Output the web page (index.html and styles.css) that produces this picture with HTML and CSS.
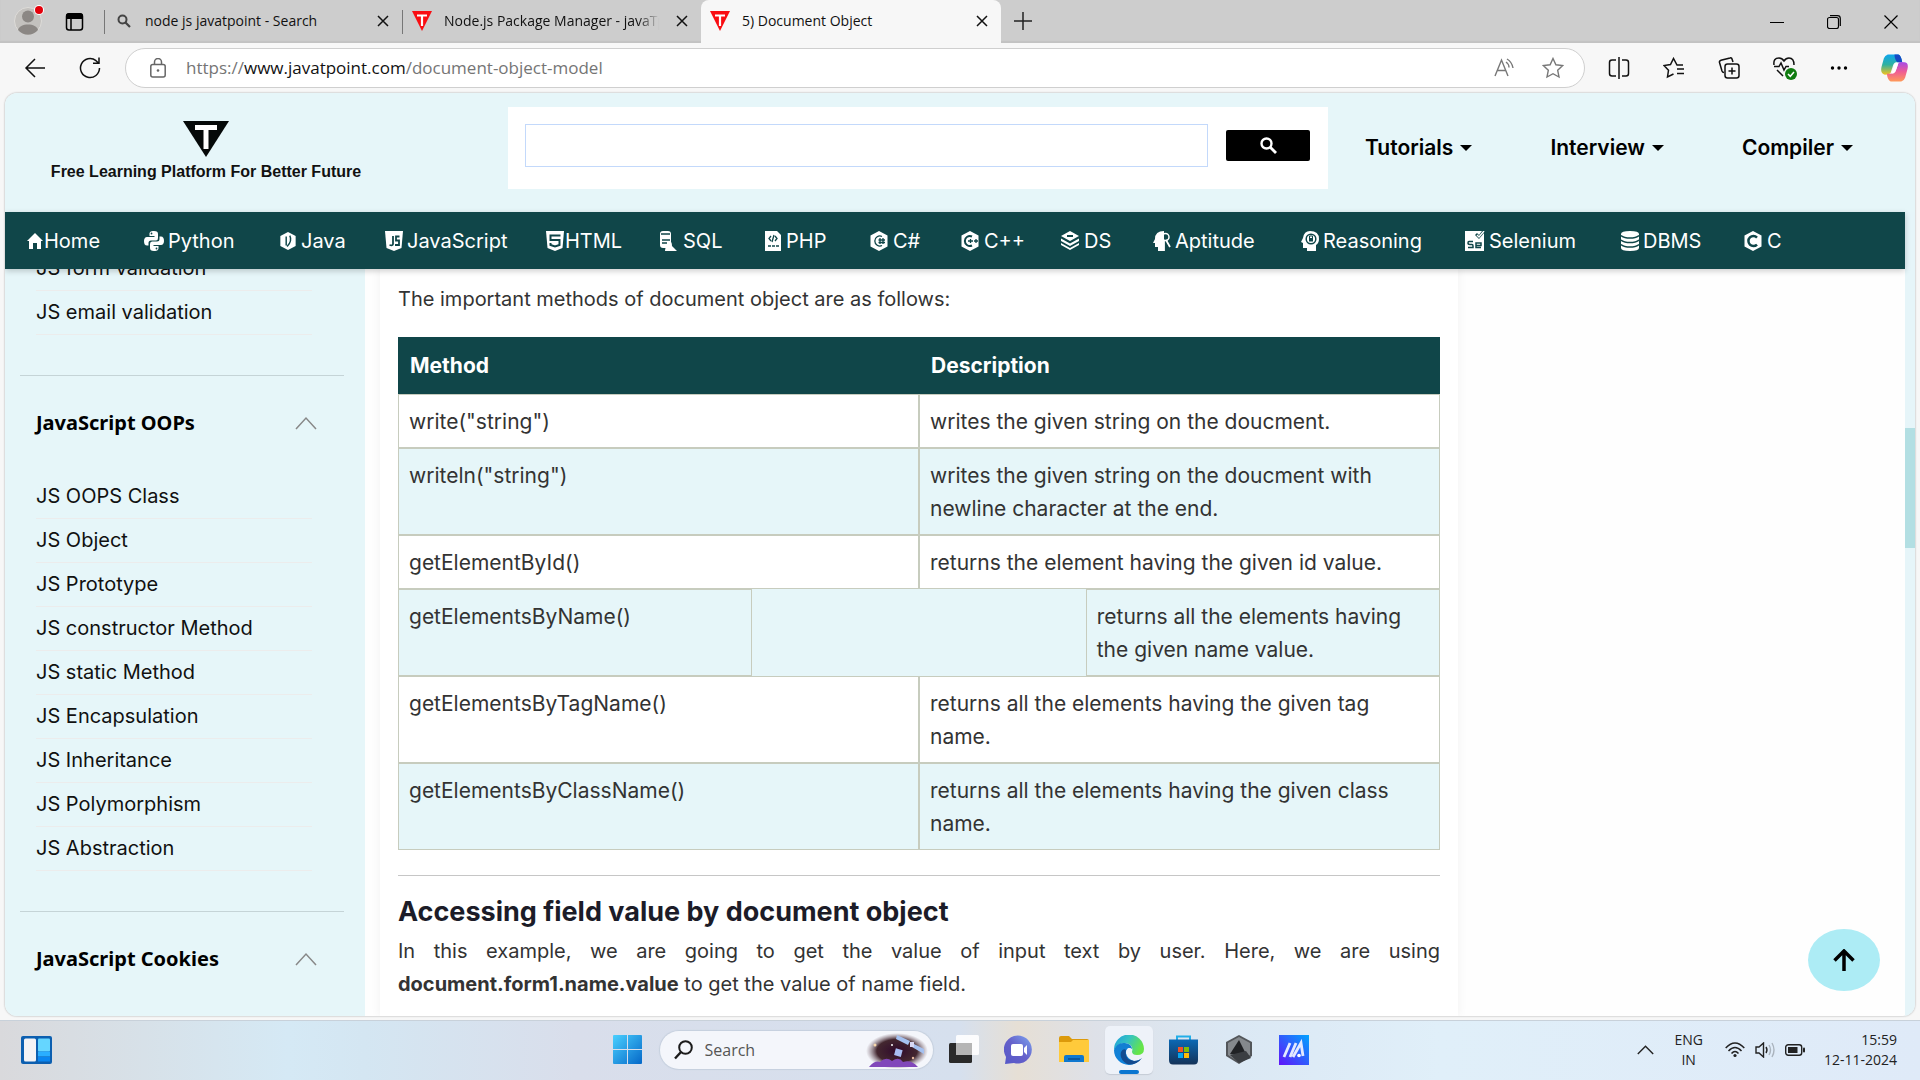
FILE: index.html
```html
<!DOCTYPE html>
<html lang="en">
<head>
<meta charset="utf-8">
<title>5) Document Object</title>
<link rel="stylesheet" href="styles.css">
</head>
<body>
<svg width="0" height="0" class="defs" aria-hidden="true">
  <defs>
    <symbol id="close" viewBox="0 0 12 12"><path d="M1 1L11 11M11 1L1 11" fill="none" stroke="#111" stroke-width="1.5"/></symbol>
    <symbol id="fav" viewBox="0 0 20 20"><path d="M0 0H20L10 20Z" fill="#f90d12"/><path d="M5 4.500H15M10 4.500V15" fill="none" stroke="#fff" stroke-width="2.200"/></symbol>
    <symbol id="up" viewBox="0 0 22 14"><path d="M1 13L11 2L21 13" fill="none" stroke="#888" stroke-width="1.500"/></symbol>
    <symbol id="hex" viewBox="0 0 20 20"><path d="M10 0L18.500 4.500V15.500L10 20L1.500 15.500V4.500Z" fill="#fff"/></symbol>
  </defs>
</svg>

<div class="tabbar">
  <button class="profile" aria-label="Profile"><svg width="32" height="32" viewBox="0 0 32 32"><circle cx="15" cy="18" r="13.500" fill="#c3c1be" stroke="#dedcd9"/><circle cx="15" cy="13.500" r="6" fill="#8b8784"/><path d="M5 27C6 19.500 24 19.500 25 27A13 13 0 0 1 5 27Z" fill="#8b8784"/><circle cx="26" cy="7" r="5" fill="#fff"/><circle cx="26" cy="7" r="4" fill="#e3000b"/></svg></button>
  <button class="workspaces" aria-label="Tab actions"><svg width="20" height="20" viewBox="0 0 20 20"><rect x="1.500" y="2" width="16" height="16" rx="2.500" fill="none" stroke="#000" stroke-width="1.500"/><path d="M1 7V4Q1 1 4 1H15Q18 1 18 4V7Z"/><path d="M6 7V18" stroke="#000" stroke-width="1.500"/></svg></button>
  <div class="tab first">
    <svg width="14" height="14" viewBox="0 0 14 14"><circle cx="5.500" cy="5.500" r="4" fill="none" stroke="#444" stroke-width="2"/><path d="M8.500 8.500L13 13" stroke="#444" stroke-width="2.200"/></svg>
    <a href="#" class="tab-title">node js javatpoint - Search</a>
    <button aria-label="Close tab"><svg width="12" height="12"><use href="#close"/></svg></button>
  </div>
  <div class="tab second">
    <svg width="20" height="20"><use href="#fav"/></svg>
    <a href="#" class="tab-title fade">Node.js Package Manager - javaTpoint</a>
    <button aria-label="Close tab"><svg width="12" height="12"><use href="#close"/></svg></button>
  </div>
  <div class="tab active">
    <svg width="20" height="20"><use href="#fav"/></svg>
    <a href="#" class="tab-title">5) Document Object</a>
    <button aria-label="Close tab"><svg width="12" height="12"><use href="#close"/></svg></button>
  </div>
  <button class="new-tab" aria-label="New tab"><svg width="18" height="18" viewBox="0 0 18 18"><path d="M9 0V18M0 9H18" stroke="#222" stroke-width="1.500"/></svg></button>
  <div class="window-buttons">
    <button aria-label="Minimize"><svg width="14" height="14" viewBox="0 0 14 14"><path d="M0 7.500H14" stroke="#000"/></svg></button>
    <button aria-label="Restore"><svg width="14" height="14" viewBox="0 0 14 14"><rect x=".5" y="2.500" width="11" height="11" rx="2" fill="none" stroke="#000" stroke-width="1.200"/><path d="M3 .7H10.500Q13.300 .7 13.300 3.500V11" fill="none" stroke="#000" stroke-width="1.200"/></svg></button>
    <button aria-label="Close"><svg width="14" height="14" viewBox="0 0 14 14"><path d="M.5 .5L13.500 13.500M13.500 .5L.5 13.500" stroke="#000" stroke-width="1.200"/></svg></button>
  </div>
</div>

<div class="toolbar">
  <button aria-label="Back"><svg width="22" height="20" viewBox="0 0 22 20"><path d="M21 10H2M11 1L2 10L11 19" fill="none" stroke="#111" stroke-width="1.500"/></svg></button>
  <button aria-label="Reload" class="reload"><svg width="22" height="22" viewBox="0 0 22 22"><path d="M20.500 11A9.500 9.500 0 1 1 17 3.700L19.500 6M20 .5V6.300H14" fill="none" stroke="#111" stroke-width="1.500"/></svg></button>
  <div class="address">
    <svg width="16" height="20" viewBox="0 0 16 20"><rect x=".8" y="6.500" width="14.400" height="12.500" rx="2" fill="none" stroke="#666" stroke-width="1.500"/><path d="M4.500 6V4A3.500 3.500 0 0 1 11.500 4V6" fill="none" stroke="#666" stroke-width="1.500"/><circle cx="8" cy="12.500" r="1.300" fill="#666"/></svg>
    <div class="url" role="textbox" aria-label="Address">https://<span>www.javatpoint.com</span>/document-object-model</div>
    <button aria-label="Read aloud"><svg width="20" height="20" viewBox="0 0 20 20" fill="none" stroke="#777" stroke-width="1.400"><path d="M1 18L7.500 2L14 18M3.500 12.500H11.500M12 4Q15 6 15 9.500M13 1Q18 4 19 10"/></svg></button>
    <button aria-label="Add to favorites" class="star"><svg width="22" height="22" viewBox="0 0 22 22" fill="none" stroke="#777" stroke-width="1.400"><path d="M11 1.500L13.900 7.800L20.700 8.600L15.700 13.300L17 20L11 16.700L5 20L6.300 13.300L1.300 8.600L8.100 7.800Z"/></svg></button>
  </div>
  <div class="tools">
    <button aria-label="Split screen"><svg width="22" height="22" viewBox="0 0 22 22" fill="none" stroke="#111" stroke-width="1.500"><path d="M8 3H4Q1.500 3 1.500 5.500V16.500Q1.500 19 4 19H8M14 3H18Q20.500 3 20.500 5.500V16.500Q20.500 19 18 19H14M11 0V22"/></svg></button>
    <button aria-label="Favorites"><svg width="22" height="22" viewBox="0 0 22 22" fill="none" stroke="#111" stroke-width="1.500"><path d="M20 8H14L10.500 1.500L7.500 7.500L1 8.500L5.500 13.300L4.500 20L10.500 17M14 12H21M14 16.500H21"/></svg></button>
    <button aria-label="Collections"><svg width="22" height="22" viewBox="0 0 22 22" fill="none" stroke="#111" stroke-width="1.500"><rect x="7" y="7" width="14" height="14" rx="2.500"/><path d="M14 10.500V17.500M10.500 14H17.500M15 5L14 2Q13.500 .5 12 1L3 3.200Q1 4 1.500 5.500L4 14Q4.500 15.500 6 15.500"/></svg></button>
    <button aria-label="Browser essentials"><svg width="24" height="24" viewBox="0 0 24 24" fill="none" stroke="#111" stroke-width="1.500"><path d="M1 9Q0 2 6 2Q9 2 11 5Q13 2 16 2Q21 2 21 9M1 10.500H6L8 7L11 14L13 10.500H16M4 14L10 20"/><circle cx="18" cy="18" r="6" fill="#107c10" stroke="none"/><path d="M15 18L17.300 20.300L21 16" stroke="#fff"/></svg></button>
    <button aria-label="Settings and more"><svg width="18" height="6" viewBox="0 0 18 6"><circle cx="2.500" cy="3" r="1.700"/><circle cx="9" cy="3" r="1.700"/><circle cx="15.500" cy="3" r="1.700"/></svg></button>
    <button aria-label="Copilot"><svg width="27" height="28" viewBox="0 0 28 28">
      <defs><linearGradient id="c1" x1="0" y1="0" x2="0" y2="1"><stop offset="0" stop-color="#0ea5ee"/><stop offset=".5" stop-color="#2eb1a0"/><stop offset="1" stop-color="#f6c21c"/></linearGradient><linearGradient id="c2" x1="0" y1="0" x2="0" y2="1"><stop offset="0" stop-color="#a44bea"/><stop offset=".5" stop-color="#ef5c95"/><stop offset="1" stop-color="#ff9a58"/></linearGradient></defs>
      <path d="M7 0H18Q21 1 22 8H16Q13 8 12 13L10 19Q9 21 4 21Q-1 20 .5 13L3 4Q4 1 7 0Z" fill="url(#c1)"/><path d="M14 0H18Q21 1 22 8H17Q14 5 14 0Z" fill="#1549c4"/>
      <path d="M21 28H10Q7 27 6 20H9Q14 20 16 15L18 9Q19 7 24 8Q29 8 27.500 15L25 24Q24 27 21 28Z" fill="url(#c2)"/><path d="M14 10Q16 8 18 9L15 18Q14 20 11 20Z" fill="#fff"/></svg></button>
  </div>
</div>

<div class="viewport">
  <div class="page">
    <header class="site-header">
      <a href="#" class="logo">
        <svg width="46" height="36" viewBox="0 0 46 36"><path d="M0 0H46L23 36Z" fill="#050909"/><path d="M12 6.500H34M23 6.500V28" fill="none" stroke="#fff" stroke-width="5"/></svg>
        <span>Free Learning Platform For Better Future</span>
      </a>
      <form class="search">
        <input type="text" aria-label="Search">
        <button type="button" aria-label="Search"><svg width="17" height="17" viewBox="0 0 17 17"><circle cx="6.500" cy="6.500" r="5" fill="none" stroke="#fff" stroke-width="2.400"/><path d="M10 10L16 16" stroke="#fff" stroke-width="2.800"/></svg></button>
      </form>
      <div class="menus">
        <button>Tutorials</button>
        <button>Interview</button>
        <button>Compiler</button>
      </div>
    </header>
    <nav class="topics">
      <a href="#" class="tight"><svg width="16" height="18" viewBox="0 0 16 18" fill="#fff"><path d="M8 1L16 9H14V17H10V11H6V17H2V9H0Z"/></svg>Home</a>
      <a href="#"><svg width="20" height="20" viewBox="0 0 20 20"><path d="M10 0C6 0 5.500 1.500 5.500 3V5H10.500V6H3C1 6 0 8 0 10C0 13 1 14.500 3 14.500H4.500V12Q4.500 9.500 7 9.500H12Q14 9.500 14 7V3C14 1 13 0 10 0ZM10 20C14 20 14.500 18.500 14.500 17V15H9.500V14H17C19 14 20 12 20 10C20 7 19 5.500 17 5.500H15.500V8Q15.500 10.500 13 10.500H8Q6 10.500 6 13V17C6 19 7 20 10 20Z" fill="#fff"/><circle cx="7.500" cy="2.500" r=".9" fill="#104649"/><circle cx="12.500" cy="17.500" r=".9" fill="#104649"/></svg>Python</a>
      <a href="#"><svg width="18" height="20" viewBox="0 0 20 20"><use href="#hex"/><path d="M8 5V15M12 4Q15 10 9 16" fill="none" stroke="#104649" stroke-width="1.600"/></svg>Java</a>
      <a href="#"><svg width="18" height="20" viewBox="0 0 18 20"><path d="M0 0H18L16.500 17L9 20L1.500 17Z" fill="#fff"/><path d="M8 5V13Q8 15 4.500 14M14.500 5.500H11V9.500H14V14L10 14" fill="none" stroke="#104649" stroke-width="1.800"/></svg>JavaScript</a>
      <a href="#" class="tight"><svg width="18" height="20" viewBox="0 0 18 20"><path d="M0 0H18L16.500 17L9 20L1.500 17Z" fill="#fff"/><path d="M14.500 4.500H4.500V9H13.500V14L9 15.500L4.500 14V12" fill="none" stroke="#104649" stroke-width="2"/></svg>HTML</a>
      <a href="#" class="roomy"><svg width="18" height="20" viewBox="0 0 18 20"><rect x="1" width="11" height="17" rx="3" fill="#fff"/><path d="M2 3H11M3 9H11M3 12H8" stroke="#104649" stroke-width="1.500"/><path d="M10 10Q13 10 13 15L18 20H6Q6 15 10 15Z" fill="#fff"/></svg>SQL</a>
      <a href="#"><svg width="18" height="20" viewBox="0 0 18 20"><path d="M1 0H13L17 4V20H1Z" fill="#fff"/><path d="M7 5L5 7.500L7 10M11 5L13 7.500L11 10M10 4L8 11M4 15H7M8 15H11M12 15H15" fill="none" stroke="#104649" stroke-width="1.300"/></svg>PHP</a>
      <a href="#"><svg width="20" height="20" viewBox="0 0 20 20"><use href="#hex"/><path d="M13 5.500A5 5 0 1 0 13 14.500M11 7V13M14 7V13M9.500 9H16M9.500 11.500H16" fill="none" stroke="#104649" stroke-width="1.300"/></svg>C#</a>
      <a href="#"><svg width="20" height="20" viewBox="0 0 20 20"><use href="#hex"/><path d="M12 5.500A5 5 0 1 0 12 14.500" fill="none" stroke="#104649" stroke-width="2"/><path d="M8 10H13M14 10H18M10.500 8V12M16 8V12" stroke="#104649" stroke-width="1.300"/></svg>C++</a>
      <a href="#"><svg width="20" height="20" viewBox="0 0 20 20" fill="#fff"><path d="M10 0L19 5L10 10L1 5Z"/><path d="M1 7.500L10 12.500L19 7.500V10L10 15L1 10ZM1 12L10 17L19 12V14L10 19L1 14Z"/><path d="M7 5H13" stroke="#104649" stroke-width="2"/></svg>DS</a>
      <a href="#"><svg width="18" height="20" viewBox="0 0 18 20"><path d="M11 0Q2 0 2 8L0 12H2V16H5V20H11Z" fill="#fff"/><circle cx="12.500" cy="6" r="3.500" fill="none" stroke="#fff" stroke-width="1.500"/><path d="M13 9L17 16M11 9V20" stroke="#fff" stroke-width="1.800"/></svg>Aptitude</a>
      <a href="#"><svg width="18" height="20" viewBox="0 0 18 20"><path d="M9 0Q18 0 18 8Q18 12 15 14V20H6V17H2V12L0 11L2 7Q3 0 9 0Z" fill="#fff"/><circle cx="10" cy="8" r="4.800" fill="none" stroke="#104649" stroke-width="1.500"/><rect x="8" y="7" width="4" height="3.500" fill="#104649"/><path d="M8.500 7V5H11.500V7" fill="none" stroke="#104649"/></svg>Reasoning</a>
      <a href="#"><svg width="20" height="20" viewBox="0 0 20 20"><path d="M0 0H17L14 4L12 2L10 4L14 8L19 2V20H0Z" fill="#fff"/><path d="M19 0L14 6L12 4" fill="none" stroke="#fff" stroke-width="1.400"/><path d="M8 10.500H4Q3 10.500 3 12Q3 13.500 5 13.500H7Q8 13.500 8 15V16.500H3M11 14.500H16V12H11V16.500H16" fill="none" stroke="#104649" stroke-width="1.500"/></svg>Selenium</a>
      <a href="#"><svg width="18" height="20" viewBox="0 0 18 20"><path d="M0 3Q0 0 9 0T18 3V17Q18 20 9 20T0 17Z" fill="#fff"/><path d="M0 4.500Q3 7 9 7T18 4.500M0 9Q3 11.500 9 11.500T18 9M0 13.500Q3 16 9 16T18 13.500" fill="none" stroke="#104649" stroke-width="1.400"/></svg>DBMS</a>
      <a href="#"><svg width="20" height="20" viewBox="0 0 20 20"><use href="#hex"/><path d="M14 6.500A5 5 0 1 0 14 13.500" fill="none" stroke="#104649" stroke-width="2.500"/></svg>C</a>
    </nav>
    <div class="columns">
      <aside class="sidebar">
        <ul class="links scrolled">
          <li><a href="#">JS form validation</a></li>
          <li><a href="#">JS email validation</a></li>
        </ul>
        <h2><button>JavaScript OOPs<svg width="22" height="14"><use href="#up"/></svg></button></h2>
        <ul class="links">
          <li><a href="#">JS OOPS Class</a></li>
          <li><a href="#">JS Object</a></li>
          <li><a href="#">JS Prototype</a></li>
          <li><a href="#">JS constructor Method</a></li>
          <li><a href="#">JS static Method</a></li>
          <li><a href="#">JS Encapsulation</a></li>
          <li><a href="#">JS Inheritance</a></li>
          <li><a href="#">JS Polymorphism</a></li>
          <li><a href="#">JS Abstraction</a></li>
        </ul>
        <h2><button>JavaScript Cookies<svg width="22" height="14"><use href="#up"/></svg></button></h2>
      </aside>
      <main class="article">
        <p>The important methods of document object are as follows:</p>
        <table>
          <colgroup><col class="outer"><col><col><col class="outer"></colgroup>
          <thead><tr><th colspan="2">Method</th><th colspan="2">Description</th></tr></thead>
          <tbody>
            <tr><td colspan="2">write("string")</td><td colspan="2">writes the given string on the doucment.</td></tr>
            <tr><td colspan="2">writeln("string")</td><td colspan="2">writes the given string on the doucment with newline character at the end.</td></tr>
            <tr><td colspan="2">getElementById()</td><td colspan="2">returns the element having the given id value.</td></tr>
            <tr><td>getElementsByName()</td><td colspan="2" class="blank"></td><td>returns all the elements having the given name value.</td></tr>
            <tr><td colspan="2">getElementsByTagName()</td><td colspan="2">returns all the elements having the given tag name.</td></tr>
            <tr><td colspan="2">getElementsByClassName()</td><td colspan="2">returns all the elements having the given class name.</td></tr>
          </tbody>
        </table>
        <hr>
        <h1>Accessing field value by document object</h1>
        <p class="justified">In this example, we are going to get the value of input text by user. Here, we are using <b>document.form1.name.value</b> to get the value of name field.</p>
      </main>
    </div>
    <button class="to-top" aria-label="Back to top"><svg width="22" height="22" viewBox="0 0 22 22"><path d="M11 22V2M1.500 11.500L11 2L20.500 11.500" fill="none" stroke="#000" stroke-width="3.500"/></svg></button>
  </div>
  <div class="scrollbar"><div class="thumb"></div></div>
</div>

<footer class="taskbar">
  <button class="widgets" aria-label="Widgets"><svg width="31" height="28" viewBox="0 0 31 28"><rect width="31" height="28" rx="2" fill="#0c5fb0"/><rect x="3" y="2.500" width="12" height="23" rx="1.500" fill="#f3f3f5"/><rect x="17" y="2.500" width="12" height="13" rx="1" fill="#65d6ff"/><rect x="17" y="15.500" width="12" height="5" fill="#2aaeff"/><rect x="17" y="21" width="12" height="4.500" fill="#0a86f0"/></svg></button>
  <div class="apps">
    <button aria-label="Start"><svg width="30" height="30" viewBox="0 0 30 30"><defs><linearGradient id="w" x1="0" y1="0" x2="1" y2="1"><stop offset="0" stop-color="#4ad0ff"/><stop offset="1" stop-color="#0568c8"/></linearGradient></defs><path d="M1 0H14V14H0V1Q0 0 1 0ZM15 0H28Q29 0 29 1V14H15ZM0 15H14V29H1Q0 29 0 28ZM15 15H29V28Q29 29 28 29H15Z" fill="url(#w)"/></svg></button>
    <label class="task-search">
      <svg width="19" height="20" viewBox="0 0 19 20"><circle cx="11.500" cy="7.500" r="6.300" fill="none" stroke="#1b1b1b" stroke-width="2"/><path d="M7 12L1 18.500" stroke="#1b1b1b" stroke-width="2.400"/></svg>
      <input type="text" placeholder="Search" aria-label="Search the computer">
      <svg width="62" height="36" viewBox="0 0 62 36"><defs><radialGradient id="sp"><stop offset="0" stop-color="#300a2c"/><stop offset=".65" stop-color="#43272f"/><stop offset="1" stop-color="#7d6873" stop-opacity="0"/></radialGradient></defs><ellipse cx="31" cy="19" rx="31" ry="18" fill="url(#sp)"/><path d="M3 35Q9 28 14 30Q20 24 26 29Q33 24 37 30Q45 27 52 35Z" fill="#8148ba"/><path d="M31 3L44 9L42 13L30 7ZM48 12L58 17V22L46 15Z" fill="#a5c1f0"/><rect x="44" y="10" width="4" height="5" fill="#d8d8f3"/><rect x="29" y="17" width="7" height="7" fill="#a9bdf3" transform="rotate(15 32 20)"/><circle cx="9" cy="13" r="1.500" fill="#f7d7ac"/><circle cx="26" cy="13" r="1" fill="#fff"/><circle cx="47" cy="26" r="1.200" fill="#e6b99d"/></svg>
    </label>
    <button aria-label="Task view"><svg width="30" height="30" viewBox="0 0 30 30"><rect y="8" width="23" height="20" rx="1.500" fill="#2a2a2a"/><rect x="7" y="0" width="23" height="20" rx="1.500" fill="#fff" fill-opacity=".9"/><rect x="7" y="8" width="16" height="12" fill="#b5b5b5"/></svg></button>
    <button aria-label="Chat"><svg width="30" height="30" viewBox="0 0 30 30"><defs><linearGradient id="ch" x1="0" y1="1" x2="1" y2="0"><stop offset="0" stop-color="#5558c8"/><stop offset=".5" stop-color="#6560ca"/><stop offset="1" stop-color="#7da5f0"/></linearGradient></defs><path d="M1 29L2 22A14 14 0 1 1 10 28Z" fill="url(#ch)"/><rect x="7" y="9" width="12" height="12" rx="2" fill="#fff"/><path d="M20 13L23 10V20L20 17Z" fill="#fff"/></svg></button>
    <button aria-label="File Explorer"><svg width="30" height="30" viewBox="0 0 30 30"><path d="M0 10V3Q0 1 2 1H10L13 4H28Q30 4 30 6V10Z" fill="#dc9a0b"/><path d="M0 7H12L14 5H30V27H0Z" fill="#ffca3b"/><path d="M5 27V22Q5 20 7 20H23Q25 20 25 22V27Z" fill="#0f78cf"/><path d="M9 24H21" stroke="#0a4d91" stroke-width="1.500"/></svg></button>
    <button class="current" aria-label="Microsoft Edge"><svg width="30" height="30" viewBox="0 0 30 30"><defs><linearGradient id="e1" x1="0" y1="0" x2="1" y2=".4"><stop offset="0" stop-color="#1d9de0"/><stop offset=".5" stop-color="#35c3c1"/><stop offset="1" stop-color="#66e548"/></linearGradient><linearGradient id="e2" x1="0" y1="0" x2="0" y2="1"><stop offset="0" stop-color="#137fd1"/><stop offset="1" stop-color="#0f82dc"/></linearGradient></defs><path d="M0 15A15 15 0 0 1 30 14Q30 20 23 20Q18 20 18 17Q20 9 11 8Q4 8 0 15Z" fill="url(#e1)"/><path d="M0 15Q3 7 11 8Q18 9 18 14Q13 11 12 18Q13 24 20 26Q25 26 28 23Q22 30 15 30A15 15 0 0 1 0 15Z" fill="url(#e2)"/><path d="M12 15Q10 25 20 26Q25 26 28 23Q22 31 13 29Q5 24 7 17Q9 13 12 15Z" fill="#134b90"/><path d="M12 18Q12 13 16 13Q18 14 18 17Q18 20 22 20.500Q15 23 12 18Z" fill="#eef2f9"/></svg></button>
    <button aria-label="Microsoft Store"><svg width="30" height="30" viewBox="0 0 30 30"><defs><linearGradient id="st" x1="0" y1="0" x2="0" y2="1"><stop offset="0" stop-color="#0b69b5"/><stop offset="1" stop-color="#143258"/></linearGradient></defs><path d="M8 6V1.500H21V6" fill="none" stroke="#22aee8" stroke-width="2"/><path d="M0 4.500H29V25Q29 29.500 25 29.500H4Q0 29.500 0 25Z" fill="url(#st)"/><path d="M9 12H14V17H9Z" fill="#f35325"/><path d="M15 12H20V17H15Z" fill="#81bc06"/><path d="M9 18H14V23H9Z" fill="#05a6f0"/><path d="M15 18H20V23H15Z" fill="#ffba08"/></svg></button>
    <button aria-label="Armoury"><svg width="30" height="30" viewBox="0 0 30 30"><path d="M15 0L28 7V21L15 29L2 21V7Z" fill="#53565a"/><path d="M15 2L26 8V20L15 27L4 20V8Z" fill="#85898d"/><path d="M15 5L23 21L6 19Z" fill="#202225"/><path d="M6 20L22 16L27 23L15 28Z" fill="#3b3e42"/></svg></button>
    <button aria-label="MyASUS"><svg width="30" height="30" viewBox="0 0 30 30"><defs><linearGradient id="ma" x1="0" y1="1" x2="1" y2="0"><stop offset="0" stop-color="#6113fa"/><stop offset="1" stop-color="#00a4ff"/></linearGradient></defs><rect width="30" height="30" fill="url(#ma)"/><path d="M5 22L11 8M11 22L17 8M14 22L22 8L24 21" fill="none" stroke="#e4eaff" stroke-width="2.800"/><circle cx="20" cy="20.500" r="1.800" fill="#fff"/></svg></button>
  </div>
  <div class="tray">
    <svg width="17" height="10" viewBox="0 0 17 10"><path d="M.8 9L8.500 1.300L16.200 9" fill="none" stroke="#222" stroke-width="1.400"/></svg>
    <span class="lang">ENG<br>IN</span>
    <svg width="20" height="16" viewBox="0 0 20 16" fill="none" stroke="#222" stroke-width="1.500"><path d="M.7 6Q10-4 19.300 6M3.500 9Q10 2 16.500 9M6.500 11.500Q10 7.500 13.500 11.500"/><circle cx="10" cy="13.500" r="1.600" fill="#222" stroke="none"/></svg>
    <svg width="20" height="16" viewBox="0 0 20 16" fill="none" stroke="#222" stroke-width="1.400"><path d="M1 5H4L8.500 1V15L4 11H1Z"/><path d="M11 5Q13 8 11 11"/><path d="M14 3Q17 8 14 13M17 1Q21 8 17 15" stroke="#aab3bd"/></svg>
    <svg width="20" height="12" viewBox="0 0 20 12"><rect x=".7" y=".7" width="16" height="10.600" rx="2.500" fill="none" stroke="#222" stroke-width="1.400"/><rect x="3" y="3" width="9.500" height="6" fill="#222"/><rect x="18" y="3.500" width="2" height="5" rx="1" fill="#222"/></svg>
    <span class="clock">15:59<br>12-11-2024</span>
  </div>
</footer>
</body>
</html>
```
FILE: styles.css
```css
* { box-sizing: border-box; }
body {
  margin: 0;
  height: 100vh;
  display: flex;
  flex-direction: column;
  overflow: hidden;
  background: #f7f7f7;
  font-family: Inter, "Open Sans", sans-serif;
  color: #333;
}
button { border: 0; padding: 0; background: none; font: inherit; color: inherit; display: flex; align-items: center; justify-content: center; flex: none; }
input { border: 0; padding: 0; background: none; font: inherit; min-width: 0; }
a { color: inherit; text-decoration: none; }
svg { flex: none; display: block; }
.defs { position: absolute; }

/* Browser tabs */
.tabbar, .toolbar, .taskbar { font-family: "Open Sans", "Noto Sans", sans-serif; }
.tabbar {
  display: flex;
  flex: none;
  height: 43px;
  background: #cdcdcd;
  box-shadow: inset 0 -2px 1px #c2c2c2;
  font-size: 14px;
  color: #111;
}
.profile { margin-left: 13px; width: 32px; padding-bottom: 6px; }
.workspaces { margin: 0 19px 0 20px; }
.tab { display: flex; align-items: center; height: 43px; padding: 0 13px 2px 11px; position: relative; }
.tab.first { width: 298px; padding-left: 13px; gap: 14px; }
.tab.second { width: 299px; gap: 12px; padding-left: 10px; }
.tab.first::before, .tab.second::before { content: ""; width: 1px; height: 24px; background: #777; position: absolute; left: 0; top: 10px; }
.tab.active { width: 300px; gap: 12px; padding-left: 9px; background: #f7f7f7; border-radius: 8px 8px 0 0; }
.tab-title { flex: 1; min-width: 0; overflow: hidden; white-space: nowrap; }
.fade { mask-image: linear-gradient(90deg, #000 88%, transparent 98%); }
.new-tab { margin-left: 13px; padding-bottom: 2px; }
.window-buttons { margin-left: auto; display: flex; gap: 43px; padding-right: 22px; }

/* Address row */
.toolbar { display: flex; flex: none; align-items: center; height: 50px; padding: 0 12px 1px 24px; }
.reload { margin-left: 33px; }
.address {
  display: flex;
  align-items: center;
  flex: 1;
  height: 40px;
  margin-left: 24px;
  padding: 0 20px 0 24px;
  border: 1px solid #cfcfcf;
  border-radius: 20px;
  background: #fff;
}
.url { flex: 1; margin-left: 20px; font-size: 17px; line-height: 24px; color: #757575; white-space: nowrap; }
.url span { color: #111; }
.star { margin-left: 28px; }
.tools { display: flex; align-items: center; gap: 33px; margin-left: 23px; }

/* Page frame */
.viewport {
  display: flex;
  flex: 1;
  min-height: 0;
  margin: 0 5px 4px;
  border-radius: 12px;
  overflow: hidden;
  background: #fefefe;
  box-shadow: 0 0 2px #999;
}
.page { flex: 1; min-width: 0; display: flex; flex-direction: column; position: relative; }
.scrollbar { flex: none; width: 10px; background: #e6f5f9; padding-top: 335px; }
.thumb { height: 120px; background: #b3dfe3; }

.site-header { display: flex; flex: none; align-items: flex-start; height: 119px; margin-right: -10px; background: #e6f6f9; }
.logo { flex: 0 0 402px; display: flex; flex-direction: column; align-items: center; gap: 5px; padding: 28px 0 0; font: bold 16px/20px "Liberation Sans", Arial, sans-serif; color: #111; }
.search { flex: 0 1 820px; display: flex; align-items: center; gap: 18px; height: 82px; margin: 14px 0 0 101px; padding: 0 18px 5px 17px; background: #fff; }
.search input { flex: 1; height: 43px; border: 1px solid #c3d9fb; padding: 0 8px; }
.search button { width: 84px; height: 31px; background: #000; border-radius: 2px; }
.menus { flex: 1; display: flex; justify-content: space-between; margin: 41px 62px 0 37px; font-size: 21px; line-height: 28px; font-weight: 600; color: #000; }
.menus button::after { content: ""; margin-left: 7px; border: 6px solid transparent; border-top-color: #000; border-bottom: 0; }

.topics {
  display: grid;
  grid-template-columns: 117fr 135fr 106fr 161fr 113fr 105fr 105fr 91fr 100fr 93fr 148fr 164fr 156fr 122fr 162fr;
  flex: none;
  align-items: center;
  height: 57px;
  padding-left: 22px;
  background: #104649;
  color: #fff;
  font-size: 20px;
  white-space: nowrap;
  box-shadow: 0 2px 6px #0003;
  z-index: 1;
}
.topics a { display: flex; align-items: center; gap: 4px; min-width: 0; }
.topics .tight { gap: 1px; }
.topics .roomy { gap: 6px; }

.columns { display: flex; flex: 1; min-height: 0; overflow: hidden; }

/* Chapter list */
.sidebar { flex: none; width: 360px; padding: 0 21px 0 15px; background: #e6f6f9; color: #111; }
.links { list-style: none; margin: 0; padding: 0 32px 40px 16px; font-size: 20px; }
.links.scrolled { margin-top: -22px; }
.links li { height: 44px; line-height: 43px; border-bottom: 1px solid #ececec; }
.sidebar h2 { margin: 0; border-top: 1px solid #c5d4d7; font: bold 20px/28px "Noto Sans", "Open Sans", sans-serif; color: #000; }
.sidebar h2 button { width: 100%; padding: 33px 27px 38px 16px; justify-content: space-between; }

/* Article */
.article { flex: 0 1 1078px; margin-left: 15px; padding: 14px 18px 0; background: #fff; box-shadow: 0 0 10px #0000000f; font-size: 20px; line-height: 33px; }
.article p { margin: 0 0 21px; }
.article table { width: 100%; table-layout: fixed; border-spacing: 0; font-size: 21px; }
.outer { width: 34%; }
th { height: 57px; padding: 0 12px; text-align: left; background: #104649; color: #fff; font-weight: 700; }
td { padding: 10px 10px 9px; border: 1px solid #c7ccbe; vertical-align: top; }
tbody tr:nth-child(even) { background: #e6f6f9; }
td.blank { border: 0; }
.article hr { margin: 25px 0 19px; border: 0; border-top: 1px solid #c6c6c6; }
.article h1 { margin: 0 0 7px; font-size: 27px; line-height: 33px; font-weight: 700; color: #1c1c28; }
.article .justified { text-align: justify; }

.to-top { position: absolute; right: 25px; bottom: 25px; width: 72px; height: 62px; border-radius: 50%; background: #adecf5; }

/* Desktop taskbar */
.taskbar {
  display: grid;
  grid-template-columns: 1fr auto 1fr;
  align-items: center;
  flex: none;
  height: 60px;
  padding: 0 23px 1px 21px;
  background: linear-gradient(90deg, #d9d9dc, #d5e9f5 15%, #d4e6f2 19%, #d9deeb 30%, #d6e0ee 50%, #e6dfd5 53%, #dee1e8 57%, #dbe8f4 64%, #e0eff9 75%, #dfeaf8);
  border-top: 1px solid #c8d1da;
  color: #222;
  font-size: 14px;
  line-height: 20px;
}
.widgets { justify-self: start; }
.apps { display: flex; align-items: center; gap: 25px; padding-left: 3px; }
.apps > button { width: 30px; }
.task-search { display: flex; align-items: center; width: 273px; height: 38px; margin: 0 -9px 0 -8px; padding: 0 5px 0 14px; gap: 12px; border-radius: 19px; background: #f4f6fb; box-shadow: 0 0 1px 1px #c6d0de; }
.task-search input { flex: 1; font-size: 16px; }
.task-search input::placeholder { color: #555; opacity: 1; }
.apps .current { width: 48px; height: 48px; margin: 0 -9px; border-radius: 5px; background: #eef2f9; box-shadow: 0 1px 1px #c5cbd5; position: relative; }
.current::after { content: ""; width: 20px; height: 4px; border-radius: 2px; background: #0b76d0; position: absolute; left: 14px; bottom: 0; }
.tray { display: flex; align-items: center; justify-content: flex-end; gap: 10px; }
.lang { margin: 0 12px 0 10px; text-align: center; }
.clock { margin-left: 9px; text-align: right; }
```
